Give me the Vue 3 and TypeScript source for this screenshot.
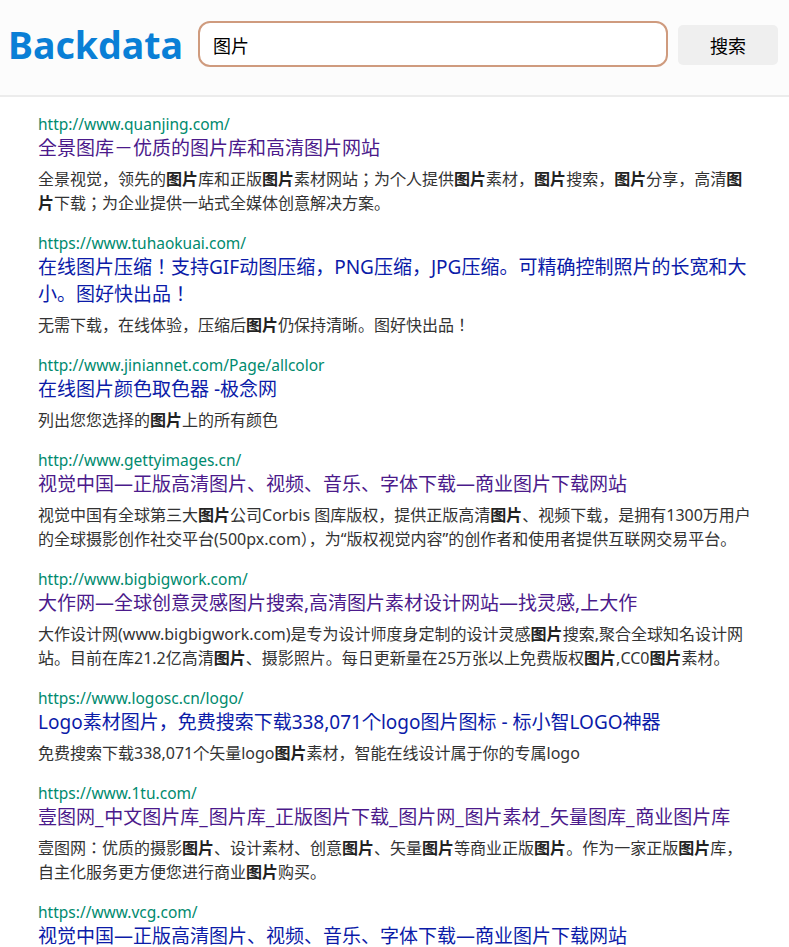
<script setup lang="ts">
interface Part { t: string; b?: boolean }
interface Item { url: string; title: string; visited?: boolean; desc: Part[] }

function parts(s: string): Part[] {
  return s.split('*').map((t, i) => ({ t, b: i % 2 === 1 }))
}

const items: Item[] = [
  { url: 'http://www.quanjing.com/', title: '全景图库－优质的图片库和高清图片网站', visited: true, desc: parts('全景视觉，领先的*图片*库和正版*图片*素材网站；为个人提供*图片*素材，*图片*搜索，*图片*分享，高清*图片*下载；为企业提供一站式全媒体创意解决方案。') },
  { url: 'https://www.tuhaokuai.com/', title: '在线图片压缩！支持GIF动图压缩，PNG压缩，JPG压缩。可精确控制照片的长宽和大小。图好快出品！', desc: parts('无需下载，在线体验，压缩后*图片*仍保持清晰。图好快出品！') },
  { url: 'http://www.jiniannet.com/Page/allcolor', title: '在线图片颜色取色器 -极念网', desc: parts('列出您您选择的*图片*上的所有颜色') },
  { url: 'http://www.gettyimages.cn/', title: '视觉中国—正版高清图片、视频、音乐、字体下载—商业图片下载网站', visited: true, desc: parts('视觉中国有全球第三大*图片*公司Corbis 图库版权，提供正版高清*图片*、视频下载，是拥有1300万用户的全球摄影创作社交平台(500px.com），为“版权视觉内容”的创作者和使用者提供互联网交易平台。') },
  { url: 'http://www.bigbigwork.com/', title: '大作网—全球创意灵感图片搜索,高清图片素材设计网站—找灵感,上大作', visited: true, desc: parts('大作设计网(www.bigbigwork.com)是专为设计师度身定制的设计灵感*图片*搜索,聚合全球知名设计网站。目前在库21.2亿高清*图片*、摄影照片。每日更新量在25万张以上免费版权*图片*,CC0*图片*素材。') },
  { url: 'https://www.logosc.cn/logo/', title: 'Logo素材图片，免费搜索下载338,071个logo图片图标 - 标小智LOGO神器', desc: parts('免费搜索下载338,071个矢量logo*图片*素材，智能在线设计属于你的专属logo') },
  { url: 'https://www.1tu.com/', title: '壹图网_中文图片库_图片库_正版图片下载_图片网_图片素材_矢量图库_商业图片库', visited: true, desc: parts('壹图网：优质的摄影*图片*、设计素材、创意*图片*、矢量*图片*等商业正版*图片*。作为一家正版*图片*库，自主化服务更方便您进行商业*图片*购买。') },
  { url: 'https://www.vcg.com/', title: '视觉中国—正版高清图片、视频、音乐、字体下载—商业图片下载网站', desc: [] },
]
</script>

<template>
  <div class="page">
    <header class="top">
      <div class="logo">Backdata</div>
      <input class="box" value="图片" />
      <button class="go">搜索</button>
    </header>
    <main class="list">
      <article v-for="it in items" :key="it.url" class="item">
        <div class="url">{{ it.url }}</div>
        <a class="title" :class="{ seen: it.visited }"><template v-for="(seg, i) in it.title.split('_')" :key="i"><span v-if="i > 0" class="us">_</span>{{ seg }}</template></a>
        <p class="desc"><template v-for="(p, i) in it.desc" :key="i"><b v-if="p.b">{{ p.t }}</b><template v-else>{{ p.t }}</template></template></p>
      </article>
    </main>
  </div>
</template>

<style>
html, body { margin: 0; height: 100%; overflow: hidden; background: #fff; }
</style>

<style scoped>
.page {
  width: 789px;
  height: 947px;
  overflow: hidden;
  font-family: "Noto Sans", "Noto Sans CJK JP", sans-serif;
}
.top {
  height: 97px;
  box-sizing: border-box;
  background: #fcfcfc;
  border-bottom: 2px solid #ececec;
  display: flex;
  align-items: center;
  padding: 0 11px 5px 9px;
}
.logo {
  width: 189px;
  flex: none;
  font-size: 37.5px;
  font-weight: 700;
  color: #0a7fd6;
  line-height: 46px;
  margin-left: -1px;
  padding-right: 1px;
}
.box {
  width: 470px;
  height: 46px;
  margin-bottom: 2px;
  box-sizing: border-box;
  border: 2px solid #cf9b7e;
  border-radius: 12px;
  background: #fff;
  padding: 2px 13px 0;
  font: 18px "Noto Sans", "Noto Sans CJK JP", sans-serif;
  color: #000;
  outline: none;
}
.go {
  width: 100px;
  height: 40px;
  margin-left: 10px;
  border: 0;
  border-radius: 5px;
  background: #efefef;
  font: 18px "Noto Sans", "Noto Sans CJK JP", sans-serif;
  color: #000;
  padding: 0;
}
.list { padding: 16px 38px 0; }
.item { margin-bottom: 16.9px; }
.url {
  font-size: 15.5px;
  line-height: 22px;
  color: #008a6e;
}
.title {
  display: block;
  font-size: 19px;
  line-height: 27.5px;
  color: #0b1ba8;
}
.title.seen { color: #4b1a8b; }
.us { letter-spacing: 0.85px; }
.desc {
  margin: 4.5px 0 0;
  font-size: 16px;
  line-height: 24px;
  color: #333;
}
.desc b { color: #222; }
</style>
